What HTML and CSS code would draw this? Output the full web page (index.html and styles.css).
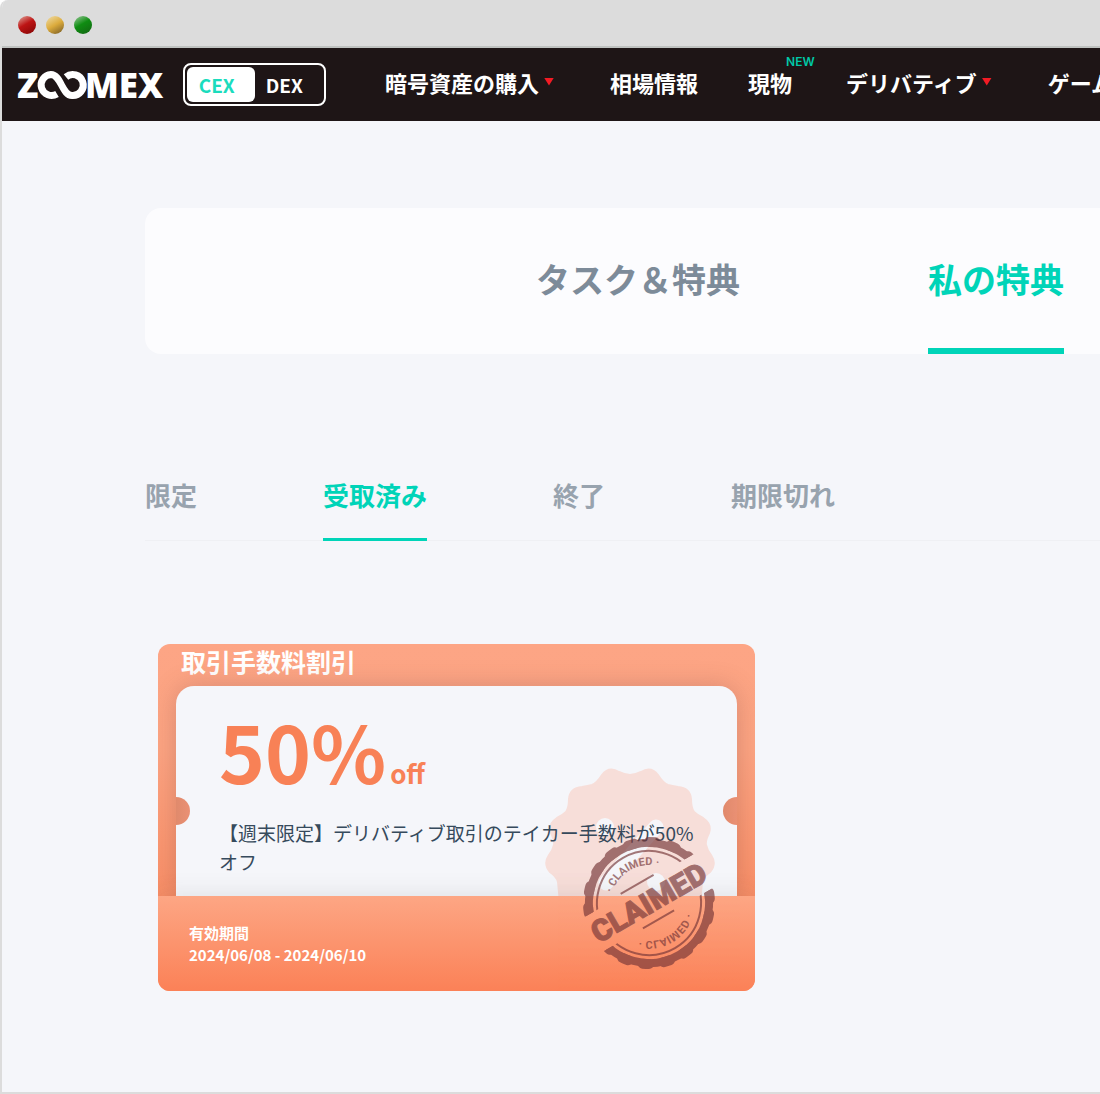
FILE: index.html
```
<!DOCTYPE html>
<html lang="ja">
<head>
    <meta charset="UTF-8">
    <meta name="viewport" content="width=device-width, initial-scale=1.0">
    <title>私の特典</title>
    <link rel="stylesheet" href="styles.css">
</head>
<body>
    <div class="window">
        <div class="titlebar">
            <span class="dot red"></span>
            <span class="dot yellow"></span>
            <span class="dot green"></span>
        </div>

        <header class="header">
            <a class="logo" href="#" aria-label="ZOOMEX">
                <svg width="150" height="38" viewBox="0 0 150 38">
                    <g class="logo-text">
                        <text x="0" y="32">Z</text>
                        <text x="68" y="32">MEX</text>
                    </g>
                    <path class="logo-ring" d="M40 28A10.500 10.500 0 1 1 34 8.500C44 8.500 45 29.500 55 29.500A10.500 10.500 0 1 0 49 11"/>
                </svg>
            </a>
            <div class="switch">
                <button type="button" class="switch-btn active">CEX</button>
                <button type="button" class="switch-btn">DEX</button>
            </div>
            <nav class="nav">
                <a class="has-menu" href="#">暗号資産の購入</a>
                <a href="#">相場情報</a>
                <a class="spot" href="#">現物<span class="new">NEW</span></a>
                <a class="has-menu" href="#">デリバティブ</a>
                <a href="#">ゲーム</a>
            </nav>
        </header>

        <main class="content">
            <div class="main-tabs">
                <button type="button">タスク＆特典</button>
                <button type="button" class="active">私の特典</button>
            </div>

            <div class="sub-tabs">
                <button type="button">限定</button>
                <button type="button" class="active">受取済み</button>
                <button type="button">終了</button>
                <button type="button">期限切れ</button>
            </div>

            <div class="coupons">
                <article class="coupon">
                    <h2>取引手数料割引</h2>
                    <div class="ticket">
                        <svg class="seal" width="180" height="180" viewBox="-90 -90 180 180">
                            <path class="seal-shape" d="M0 -80Q5 -80 11 -83Q21 -89 28 -80Q33 -72 38 -70Q42 -69 48 -68Q60 -67 61 -56Q61 -47 64 -43Q67 -40 73 -37Q82 -31 79 -22Q75 -14 76 -10Q77 -5 81 0Q87 9 80 17Q73 22 72 27L69 58H-69L-72 27Q-73 22 -80 17Q-87 9 -81 0Q-77 -5 -76 -10Q-75 -14 -79 -22Q-82 -31 -73 -37Q-67 -40 -64 -43Q-61 -47 -61 -56Q-60 -67 -48 -68Q-42 -69 -38 -70Q-33 -72 -28 -80Q-21 -89 -11 -83Q-5 -80 0 -80Z"/>
                            <circle class="seal-hole" cx="-25" cy="-28" r="9"/>
                            <circle class="seal-hole" cx="26" cy="27" r="9"/>
                            <path class="seal-slash" d="M26 -28L-24 28"/>
                        </svg>
                        <p class="amount">50%<small>off</small></p>
                        <p class="desc">【週末限定】デリバティブ取引のテイカー手数料が50%オフ</p>
                    </div>
                    <div class="validity">
                        <span>有効期間</span>
                        <span>2024/06/08 - 2024/06/10</span>
                    </div>
                    <svg class="stamp" width="140" height="140" viewBox="-70 -70 140 140">
                        <defs>
                            <clipPath id="halves">
                                <rect x="-70" y="-70" width="140" height="50"/>
                                <rect x="-70" y="19" width="140" height="51"/>
                            </clipPath>
                            <path id="arc" d="M-38 0A38 38 0 0 1 38 0"/>
                        </defs>
                        <g transform="rotate(-30)">
                            <g class="rings" clip-path="url(#halves)">
                                <circle r="60" stroke-width="8"/>
                                <circle r="61" stroke-width="10" pathLength="180" stroke-dasharray="3 7" stroke-linecap="round"/>
                                <circle r="52" stroke-width="2"/>
                            </g>
                            <path class="rule" d="M-20 -22H18M-18 19H18"/>
                            <text class="stamp-big" y="10">CLAIMED</text>
                            <text class="stamp-small"><textPath href="#arc" startOffset="50%">· CLAIMED ·</textPath></text>
                            <g transform="scale(1 -1)">
                                <text class="stamp-small"><textPath href="#arc" startOffset="50%">· CLAIMED ·</textPath></text>
                            </g>
                        </g>
                    </svg>
                </article>
            </div>
        </main>
    </div>
</body>
</html>
```
FILE: styles.css
```
* {
    box-sizing: border-box;
}
body {
    margin: 0;
    background-color: #fff;
    font-family: "Noto Sans CJK JP", "Noto Sans", sans-serif;
    overflow: hidden;
}
button {
    padding: 0;
    border: none;
    background: none;
    font-family: inherit;
    font-weight: bold;
    cursor: pointer;
}
a {
    color: inherit;
    text-decoration: none;
}

.window {
    min-height: 100vh;
    border-left: 2px solid #dcdcdc;
    border-bottom: 2px solid #dcdcdc;
    border-top-left-radius: 8px;
    background-color: #f5f6fa;
    overflow: hidden;
}
.titlebar {
    display: flex;
    align-items: center;
    gap: 10px;
    height: 48px;
    padding: 4px 16px 0;
    background-color: #dcdcdc;
    border-bottom: 2px solid #bfc2c0;
}
.dot {
    width: 18px;
    height: 18px;
    border-radius: 50%;
}
.red {
    background: linear-gradient(150deg, #dc9a90 5%, #bd1414 45%, #8c0808 90%);
}
.yellow {
    background: linear-gradient(150deg, #eed9a0 5%, #dcab3c 50%, #7d6026 95%);
}
.green {
    background: linear-gradient(150deg, #8cc28c 5%, #0f8d12 45%, #136b13 90%);
}

/* header */
.header {
    display: flex;
    align-items: center;
    height: 73px;
    padding-left: 15px;
    background-color: #1e1516;
    color: #fff;
    white-space: nowrap;
}
.logo {
    flex: none;
    display: flex;
    margin-right: 16px;
}
.logo-text {
    font-family: "Open Sans", sans-serif;
    font-size: 35px;
    font-weight: 800;
    fill: #fff;
}
.logo-ring {
    fill: none;
    stroke: #fff;
    stroke-width: 7;
}
.switch {
    flex: none;
    display: flex;
    width: 143px;
    height: 43px;
    padding: 2px;
    border: 2px solid #fff;
    border-radius: 8px;
}
.switch-btn {
    width: 68px;
    padding-right: 8px;
    border-radius: 6px;
    font-size: 19px;
    line-height: 35px;
    color: #fff;
}
.switch-btn.active {
    background-color: #fff;
    color: #1bdcbd;
}
.nav {
    display: flex;
    gap: 50px;
    margin-left: 59px;
    padding-bottom: 6px;
    font-size: 22px;
    font-weight: bold;
    line-height: 32px;
}
.has-menu {
    display: flex;
    padding-right: 6px;
}
.has-menu::after {
    content: "";
    width: 10px;
    height: 8px;
    margin: 12px 0 0 5px;
    background-color: #f31b24;
    clip-path: polygon(0 0, 100% 0, 50% 100%);
}
.spot {
    position: relative;
    padding-right: 4px;
}
.new {
    position: absolute;
    top: -12px;
    left: 38px;
    color: #00c9a7;
    font-family: Inter, sans-serif;
    font-size: 12px;
    font-weight: 600;
    line-height: 16px;
}

/* tabs */
.content {
    padding: 87px 0 100px 143px;
}
.main-tabs {
    display: flex;
    gap: 188px;
    height: 146px;
    padding-left: 391px;
    border-radius: 16px 0 0 16px;
    background-color: #fcfcfe;
}
.main-tabs button {
    border-bottom: 6px solid transparent;
    color: #7d8b99;
    font-size: 34px;
    white-space: nowrap;
}
.main-tabs .active {
    border-color: #00d4b8;
    color: #00d4b8;
}
.sub-tabs {
    display: flex;
    gap: 126px;
    height: 78px;
    margin-top: 109px;
    border-bottom: 1px solid #eff0f4;
}
.sub-tabs button {
    height: 78px;
    padding-bottom: 12px;
    border-bottom: 3px solid transparent;
    color: #98a3ae;
    font-size: 26px;
    white-space: nowrap;
}
.sub-tabs .active {
    border-color: #00d4b8;
    color: #00d4b8;
}

/* coupon */
.coupons {
    display: flex;
    padding: 103px 13px 0;
}
.coupon {
    position: relative;
    flex: 0 1 597px;
    border-radius: 12px;
    background: linear-gradient(#fda585, #fca482 30%, #f98e66 75%);
    overflow: hidden;
}
.coupon h2 {
    margin: 0;
    padding: 0 23px 2px;
    color: #fff;
    font-size: 25px;
    line-height: 34px;
}
.ticket {
    position: relative;
    height: 210px;
    margin: 6px 18px 0;
    padding: 16px 40px 0 43px;
    border-radius: 18px 18px 0 0;
    background-color: #f5f6fa;
    box-shadow: 0 0 24px rgba(110, 60, 60, 0.25);
}
/* punched holes on both sides */
.ticket::before,
.ticket::after {
    content: "";
    position: absolute;
    top: 111px;
    width: 14px;
    height: 28px;
    background: linear-gradient(90deg, #e08a6c, #ea9074);
}
.ticket::before {
    left: 0;
    border-radius: 0 14px 14px 0;
}
.ticket::after {
    right: 0;
    border-radius: 14px 0 0 14px;
}
.seal {
    position: absolute;
    right: 17px;
    top: 79px;
}
.seal-shape {
    fill: #f7ded9;
    stroke: #f7ded9;
    stroke-width: 2;
    stroke-linejoin: round;
}
.seal-hole {
    fill: #f5f6fa;
}
.seal-slash {
    stroke: #f5f6fa;
    stroke-width: 15;
    stroke-linecap: round;
}
.amount {
    position: relative;
    height: 96px;
    margin: 0;
    color: #f88156;
    font-size: 78px;
    font-weight: bold;
    line-height: 96px;
}
.amount small {
    margin-left: 4px;
    font-size: 26px;
}
.desc {
    position: relative;
    margin: 20px 0 0;
    color: #364a5c;
    font-size: 19px;
    line-height: 29px;
}
.validity {
    position: relative;
    display: flex;
    flex-direction: column;
    height: 95px;
    padding: 26px 31px 0;
    background: linear-gradient(#fda684, #fb8157);
    box-shadow: 0 0 24px rgba(60, 60, 60, 0.12);
    color: #fff;
    font-size: 15px;
    font-weight: bold;
    line-height: 22px;
}
.stamp {
    position: absolute;
    right: 36px;
    bottom: 18px;
    opacity: 0.66;
}
.rings {
    fill: none;
    stroke: #763638;
}
.rule {
    stroke: #763638;
    stroke-width: 2;
}
.stamp-big,
.stamp-small {
    fill: #763638;
    font-family: Roboto, sans-serif;
    font-weight: 900;
    text-anchor: middle;
}
.stamp-big {
    font-size: 30px;
    stroke: #763638;
    stroke-width: 1;
}
.stamp-small {
    font-size: 11px;
    font-weight: bold;
}
```
